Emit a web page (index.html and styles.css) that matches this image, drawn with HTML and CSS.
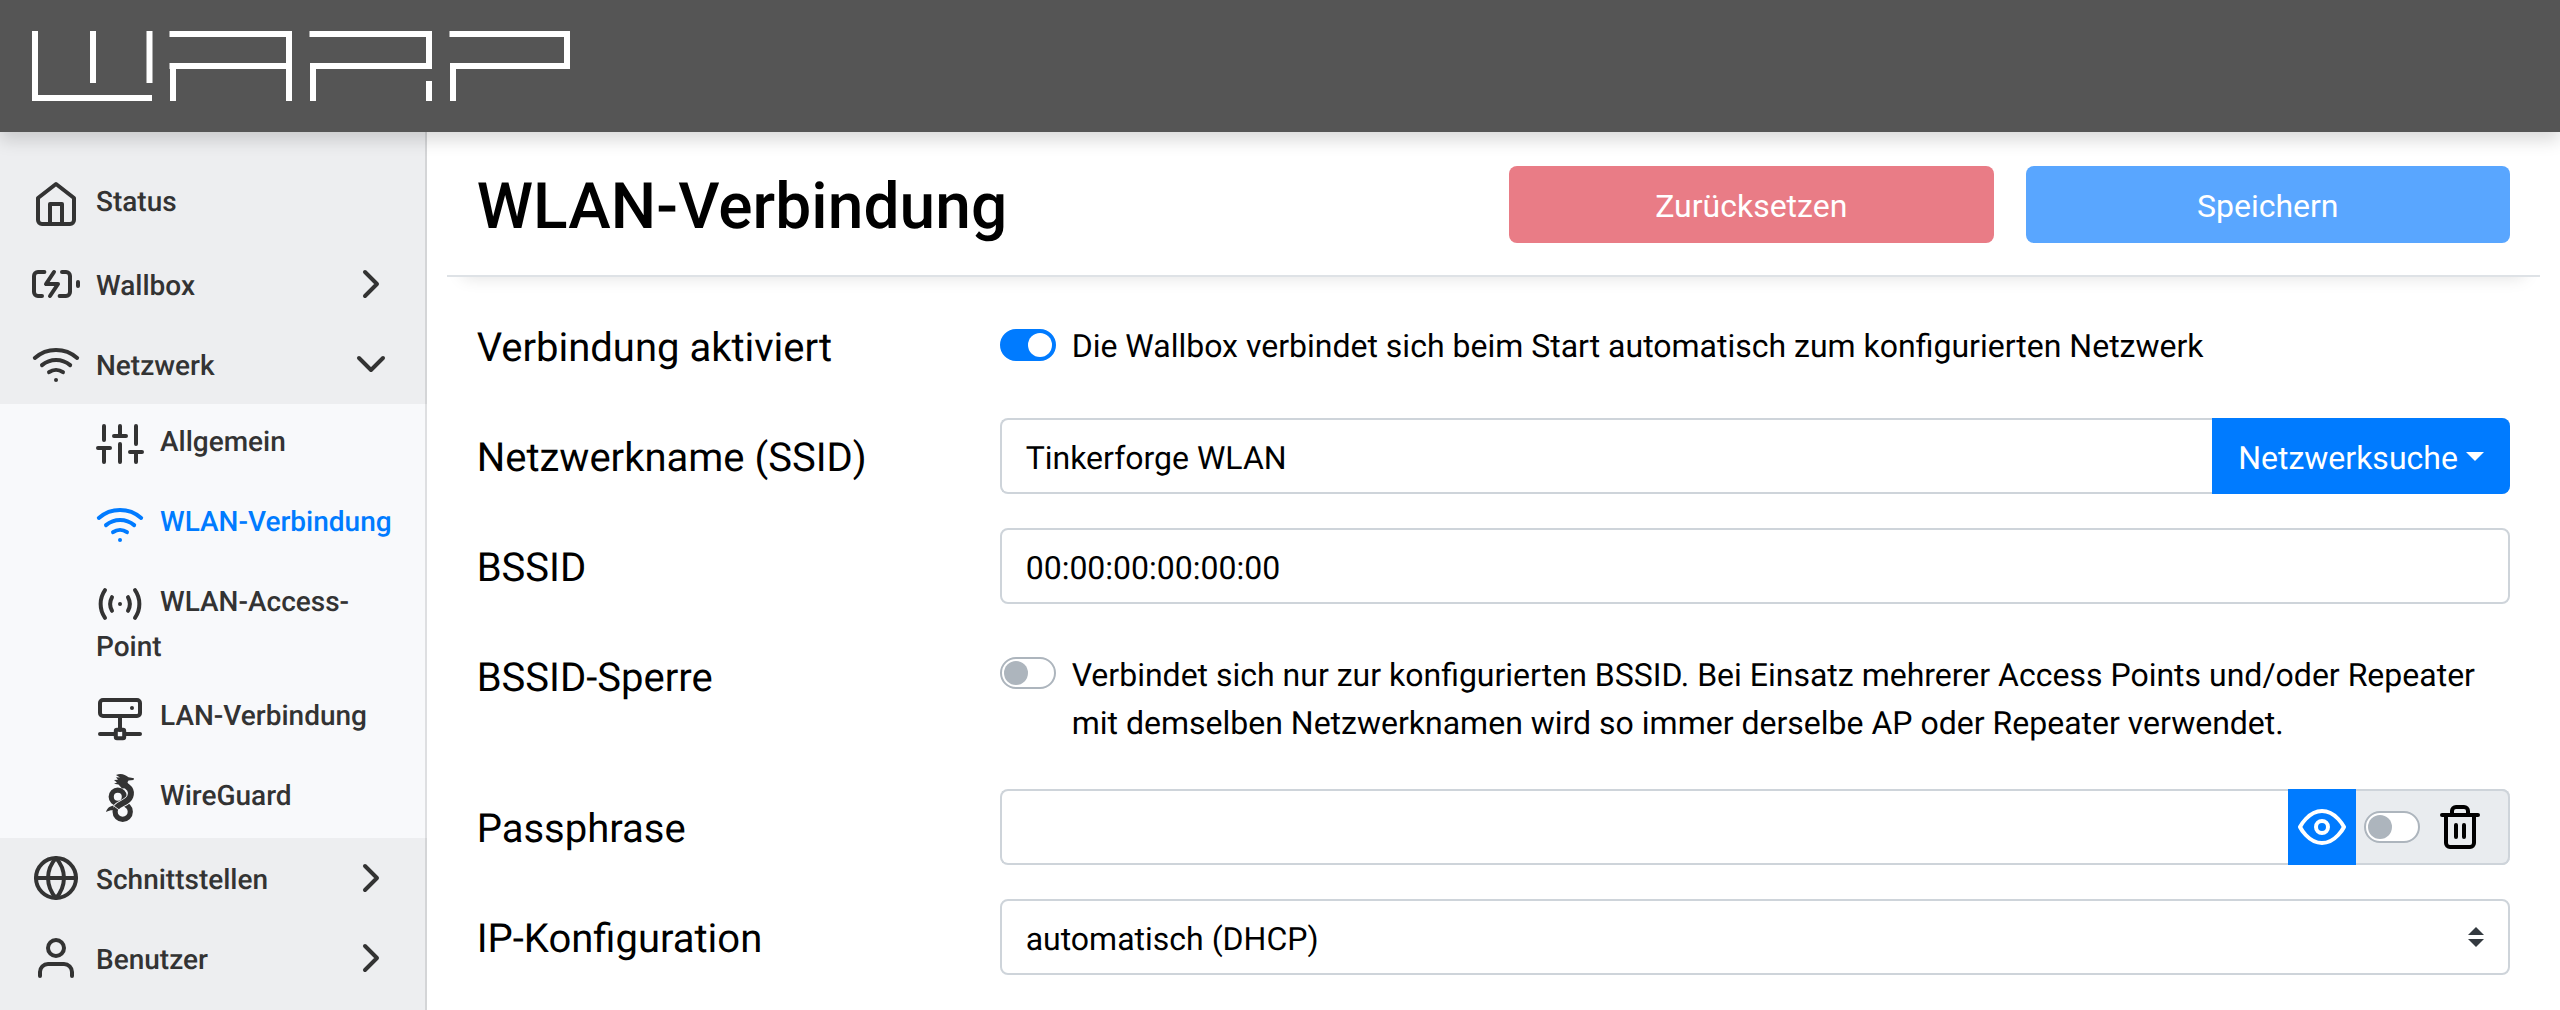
FILE: index.html
```html
<!DOCTYPE html>
<html lang="de">
<head>
<meta charset="utf-8">
<title>WLAN-Verbindung</title>
<link rel="stylesheet" href="styles.css">
</head>
<body>
<header class="topbar">
  <svg class="logo" width="540" height="70" viewBox="0 0 540 70" fill="none" stroke="#fff" stroke-width="6">
    <path d="M3 0V67H120M61 0V52M117.500 0V52"/>
    <path d="M137.500 3H257V70M137.500 35H257M141 35V70"/>
    <path d="M277.500 3H397V35H281V70M397 50V70"/>
    <path d="M417.500 3H535V35H421V70"/>
  </svg>
</header>
<div class="layout">
  <nav class="sidebar">
    <a class="item"><svg class="icon" viewBox="0 0 24 24"><path d="M3 9l9-7 9 7v11a2 2 0 0 1-2 2H5a2 2 0 0 1-2-2z"/><path d="M9 22V12h6v10"/></svg><span>Status</span></a>
    <a class="item group"><svg class="icon" viewBox="0 0 24 24"><path d="M5 18H3a2 2 0 0 1-2-2V8a2 2 0 0 1 2-2h3.190M15 6h2a2 2 0 0 1 2 2v8a2 2 0 0 1-2 2h-3.190M23 13v-2M11 6l-4 6h6l-4 6"/></svg><span>Wallbox</span><svg class="icon chevron" viewBox="0 0 24 24"><path d="M9 18l6-6-6-6"/></svg></a>
    <a class="item group"><svg class="icon" viewBox="0 0 24 24"><path d="M5 12.550a11 11 0 0 1 14.080 0M1.420 9a16 16 0 0 1 21.160 0M8.530 16.110a6 6 0 0 1 6.950 0M12 20h.01"/></svg><span>Netzwerk</span><svg class="icon chevron" viewBox="0 0 24 24"><path d="M6 9l6 6 6-6"/></svg></a>
    <div class="submenu">
      <a class="item sub"><svg class="icon" viewBox="0 0 24 24"><path d="M4 21v-7M4 10V3M12 21v-9M12 8V3M20 21v-5M20 12V3M1 14h6M9 8h6M17 16h6"/></svg><span>Allgemein</span></a>
      <a class="item sub active"><svg class="icon" viewBox="0 0 24 24"><path d="M5 12.550a11 11 0 0 1 14.080 0M1.420 9a16 16 0 0 1 21.160 0M8.530 16.110a6 6 0 0 1 6.950 0M12 20h.01"/></svg><span>WLAN-Verbindung</span></a>
      <a class="item sub two-line"><svg class="icon" viewBox="0 0 24 24"><path d="M4.500 5.100a12 12 0 0 0 0 13.800M19.500 5.100a12 12 0 0 1 0 13.800M8 8.600a7 7 0 0 0 0 6.800M16 8.600a7 7 0 0 1 0 6.800M12 12h.01"/></svg><span>WLAN-Access-Point</span></a>
      <a class="item sub"><svg class="icon" viewBox="0 0 24 24"><rect x="2" y="3" width="20" height="8" rx="1.500"/><path d="M17.990 7h.01M12 11v7M2 20h7M15 20h7"/><rect x="9.900" y="17.900" width="4.200" height="4.200" rx=".6"/></svg><span>LAN-Verbindung</span></a>
      <a class="item sub"><svg class="icon wireguard" viewBox="0 0 48 48"><circle class="ring" cx="21.800" cy="22.700" r="6.600"/><circle class="ring" cx="26.700" cy="37.800" r="7.600"/><path class="gap" d="M27 10C33 13.500 36.500 16 34.300 22.500C32 29 24 29 20 34"/><path class="coil" d="M27 9.500C33 13.500 36.500 16 34.300 22.500C32 29 24 29 20.500 33.500"/><path class="solid" d="M17.500 31.500C13 32.500 11 34.500 10 38c3-1.800 5-2 7.500-1.800z"/><path class="solid" d="M20 1c5-2 9-.5 12.500 2.300l5.500.9-.5 1.800-5 .6c-1 1.400-1.500 2.400-.5 3.900l4 3-10 1-3.500-4-4.500-.8 3-1.200-3-2.500 4-.2-2-2.600 4 .3z"/></svg><span>WireGuard</span></a>
    </div>
    <a class="item group"><svg class="icon" viewBox="0 0 24 24"><circle cx="12" cy="12" r="10"/><path d="M2 12h20M12 2a15.300 15.300 0 0 1 4 10 15.300 15.300 0 0 1-4 10 15.300 15.300 0 0 1-4-10 15.300 15.300 0 0 1 4-10z"/></svg><span>Schnittstellen</span><svg class="icon chevron" viewBox="0 0 24 24"><path d="M9 18l6-6-6-6"/></svg></a>
    <a class="item group"><svg class="icon" viewBox="0 0 24 24"><path d="M20 21v-2a4 4 0 0 0-4-4H8a4 4 0 0 0-4 4v2"/><circle cx="12" cy="7" r="4"/></svg><span>Benutzer</span><svg class="icon chevron" viewBox="0 0 24 24"><path d="M9 18l6-6-6-6"/></svg></a>
  </nav>
  <main class="content">
    <div class="page-head">
      <h1>WLAN-Verbindung</h1>
      <button class="btn reset">Zurücksetzen</button>
      <button class="btn save">Speichern</button>
    </div>
    <form class="form">
      <div class="row">
        <label class="name">Verbindung aktiviert</label>
        <div class="check"><span class="switch on"></span><span class="text">Die Wallbox verbindet sich beim Start automatisch zum konfigurierten Netzwerk</span></div>
      </div>
      <div class="row">
        <label class="name">Netzwerkname (SSID)</label>
        <div class="field joined"><span class="value">Tinkerforge WLAN</span><span class="addon search">Netzwerksuche<i class="caret"></i></span></div>
      </div>
      <div class="row">
        <label class="name">BSSID</label>
        <div class="field"><span class="value">00:00:00:00:00:00</span></div>
      </div>
      <div class="row tall">
        <label class="name">BSSID-Sperre</label>
        <div class="check"><span class="switch"></span><span class="text">Verbindet sich nur zur konfigurierten BSSID. Bei Einsatz mehrerer Access Points und/oder Repeater mit demselben Netzwerknamen wird so immer derselbe AP oder Repeater verwendet.</span></div>
      </div>
      <div class="row">
        <label class="name">Passphrase</label>
        <div class="field joined"><span class="value"></span><span class="addon reveal"><svg class="icon" viewBox="0 0 24 24"><path d="M1 12s4-8 11-8 11 8 11 8-4 8-11 8-11-8-11-8z"/><circle cx="12" cy="12" r="3"/></svg></span><span class="clear"><span class="switch"></span><svg class="icon" viewBox="0 0 24 24"><path d="M3 6h18M19 6v14a2 2 0 0 1-2 2H7a2 2 0 0 1-2-2V6m3 0V4a2 2 0 0 1 2-2h4a2 2 0 0 1 2 2v2M10 11v6M14 11v6"/></svg></span></div>
      </div>
      <div class="row">
        <label class="name">IP-Konfiguration</label>
        <div class="field"><span class="value">automatisch (DHCP)</span><svg class="arrows" width="16" height="20" viewBox="0 0 4 5"><path fill="#343a40" d="M2 0L0 2h4zm0 5L0 3h4z"/></svg></div>
      </div>
    </form>
  </main>
</div>
</body>
</html>
```
FILE: styles.css
```css
* { box-sizing: border-box; }
body {
  margin: 0;
  height: 1010px;
  overflow: hidden;
  display: flex;
  flex-direction: column;
  background: #fff;
  color: #000;
  font: 400 32px/48px Roboto, "Liberation Sans", sans-serif;
  text-rendering: geometricPrecision;
}
.topbar {
  position: relative;
  z-index: 3;
  flex: none;
  height: 132px;
  padding: 31px 32px;
  background: #555;
  box-shadow: 0 8px 16px rgba(0, 0, 0, .15);
}
.logo { display: block; }
.layout { display: flex; flex: 1; min-height: 0; }

.sidebar {
  position: relative;
  flex: none;
  width: 426.67px;
  padding-top: 32px;
  background: #edeef0;
  color: #333;
  font-size: 28px;
  font-weight: 500;
  line-height: 34px;
}
.sidebar::after {
  content: "";
  position: absolute;
  inset: 0;
  box-shadow: inset -2px 0 0 rgba(0, 0, 0, .1);
}
.item { display: block; padding: 16px 32px; }
.item .icon { vertical-align: middle; margin-right: 16px; }
.item.group { display: flex; align-items: center; height: 80px; }
.item.group span { padding-top: 3px; }
.item.group .chevron { margin: 0 0 0 auto; }
.submenu { background: #f8f9fb; }
.item.sub { padding: 16px 32px 16px 96px; }
.item.two-line { padding-bottom: 13px; line-height: 37px; }
.item.active { color: #007bff; }
.icon {
  width: 48px;
  height: 48px;
  fill: none;
  stroke: currentColor;
  stroke-width: 2;
  stroke-linecap: round;
  stroke-linejoin: round;
}
.wireguard { stroke-linecap: butt; }
.wireguard .ring { stroke-width: 5.200; }
.wireguard .gap { stroke: #f8f9fb; stroke-width: 7.600; }
.wireguard .coil { stroke-width: 6; }
.wireguard .solid { fill: currentColor; stroke: none; }

.content { flex: 1; min-width: 0; padding: 0 20px; }
.page-head {
  display: flex;
  align-items: center;
  height: 145px;
  padding: 2px 30px 0;
  border-bottom: 2px solid #dee2e6;
  box-shadow: 0 16px 16px -16px rgba(0, 0, 0, .13);
}
h1 { flex: 1; margin: 0; padding-top: 5px; font-size: 64px; font-weight: 500; line-height: 76px; letter-spacing: .08px; }
.btn {
  width: 484.500px;
  height: 77px;
  margin-left: 32px;
  padding: 3px 0 0;
  border: 0;
  border-radius: 8px;
  color: #fff;
  font: inherit;
}
.reset { background: #e97c86; }
.save { background: #59a6ff; }

.form { padding: 31px 30px 0; }
.row { display: flex; height: 76px; margin-bottom: 34px; }
.row.tall { height: 117px; }
.name { flex: none; width: 523px; padding-top: 10px; font-size: 40px; line-height: 60px; }
.check { display: flex; flex: 1; gap: 16px; padding-top: 14px; }
.tall .check { padding-top: 13px; }
.switch {
  position: relative;
  flex: none;
  width: 56px;
  height: 32px;
  margin-top: 6px;
  border: 2px solid #adb5bd;
  border-radius: 16px;
  background: #fff;
}
.switch::after {
  content: "";
  position: absolute;
  top: 2px;
  left: 2px;
  width: 24px;
  height: 24px;
  border-radius: 50%;
  background: #adb5bd;
}
.switch.on { margin-top: 7px; border-color: #007bff; background: #007bff; }
.switch.on::after { left: 26px; background: #fff; }
.field {
  display: flex;
  flex: 1;
  align-items: center;
  border: 2px solid #ced4da;
  border-radius: 8px;
}
.field.joined { border-right: 0; }
.value { flex: 1; padding: 3px 0 0 24px; }
.addon {
  display: flex;
  align-items: center;
  justify-content: center;
  height: 76px;
  background: #007bff;
  color: #fff;
}
.search { width: 298px; padding-top: 3px; border-radius: 0 8px 8px 0; }
.caret {
  margin: -2px 0 0 8px;
  border: 9.600px solid transparent;
  border-top-color: #fff;
  border-bottom: 0;
}
.reveal { width: 68px; }
.clear {
  display: flex;
  align-items: center;
  width: 154px;
  height: 76px;
  padding-left: 8px;
  border: 2px solid #ced4da;
  border-left: 0;
  border-radius: 0 8px 8px 0;
  background: #e9ecef;
}
.clear .switch { margin: 0 16px 0 0; }
.arrows { margin-right: 24px; }
```
